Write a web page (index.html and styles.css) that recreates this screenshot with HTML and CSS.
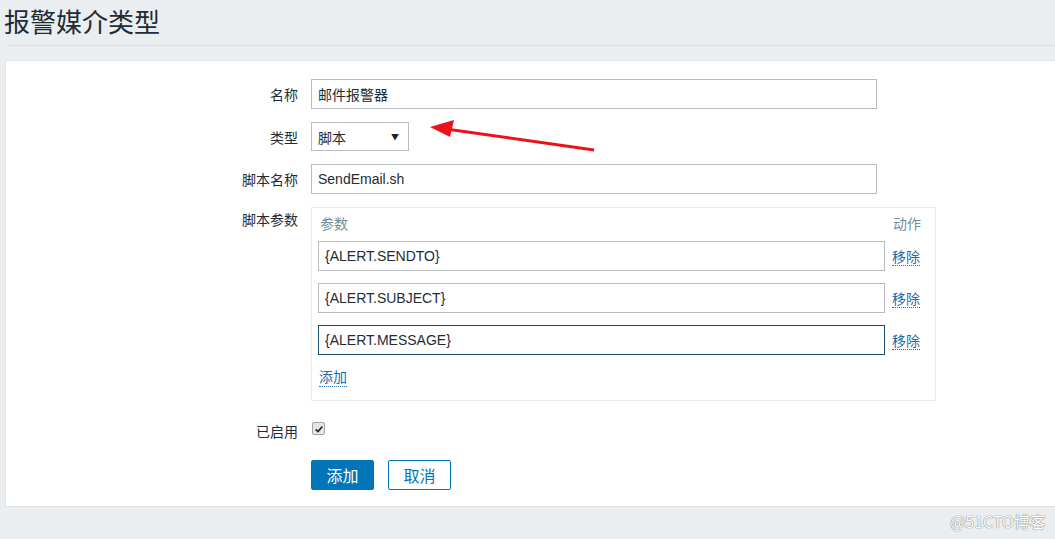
FILE: index.html
```html
<!DOCTYPE html>
<html lang="zh">
<head>
<meta charset="utf-8">
<link rel="stylesheet" href="styles.css">
</head>
<body>
<header class="page-header">
  <h1 class="page-title">报警媒介类型</h1>
</header>
<main class="panel">
  <form class="form">
    <div class="row">
      <label class="label">名称</label>
      <div class="field"><input class="input input-wide" type="text" value="邮件报警器"></div>
    </div>
    <div class="row">
      <label class="label">类型</label>
      <div class="field">
        <div class="select"><span>脚本</span><span class="caret">▼</span></div>
      </div>
    </div>
    <div class="row">
      <label class="label">脚本名称</label>
      <div class="field"><input class="input input-wide" type="text" value="SendEmail.sh"></div>
    </div>
    <div class="row row-top">
      <label class="label label-top">脚本参数</label>
      <div class="field">
        <div class="params">
          <div class="params-head"><span>参数</span><span>动作</span></div>
          <div class="param-row"><input class="input param-input" type="text" value="{ALERT.SENDTO}"><a class="link">移除</a></div>
          <div class="param-row"><input class="input param-input" type="text" value="{ALERT.SUBJECT}"><a class="link">移除</a></div>
          <div class="param-row"><input class="input param-input focused" type="text" value="{ALERT.MESSAGE}"><a class="link">移除</a></div>
          <div class="params-add"><a class="link">添加</a></div>
        </div>
      </div>
    </div>
    <div class="row row-check">
      <label class="label">已启用</label>
      <div class="field"><span class="checkbox"><svg viewBox="0 0 12 12" width="10" height="10"><path d="M2 6.5 L4.8 9 L10 3" fill="none" stroke="#222" stroke-width="2"/></svg></span></div>
    </div>
    <div class="row row-buttons">
      <span class="label"></span>
      <div class="field buttons">
        <button type="button" class="btn btn-primary">添加</button>
        <button type="button" class="btn btn-alt">取消</button>
      </div>
    </div>
  </form>
</main>
<footer class="footer"><span class="watermark">@51CTO博客</span></footer>
<svg class="arrow" width="180" height="40" viewBox="0 0 180 40">
  <line x1="170" y1="33" x2="22" y2="12" stroke="#e8141a" stroke-width="3"/>
  <polygon points="6,10 30,3 26,20" fill="#e8141a"/>
</svg>
</body>
</html>
```
FILE: styles.css
```css
* { box-sizing: border-box; }
html, body { margin: 0; padding: 0; }
body {
  background: #ebeef0;
  font-family: "Microsoft YaHei", "Noto Sans CJK SC", "Liberation Sans", sans-serif;
  color: #1f2c33;
  font-size: 14px;
  width: 1055px;
  height: 539px;
  overflow: hidden;
  position: relative;
}
.page-header {
  height: 46px;
  margin-left: 8px;
  border-bottom: 1px solid #dde1e4;
}
.page-title {
  margin: 0 0 0 -4px;
  font-weight: normal;
  font-size: 26px;
  line-height: 46px;
  color: #1f2c33;
  position: relative;
  top: -2px;
}
.panel {
  margin: 14px 0 0 5px;
  background: #fff;
  border: 1px solid #dfe4e7;
  border-right: none;
  height: 447px;
  padding-top: 18px;
}
.form { display: flex; flex-direction: column; gap: 13px; }
.row { display: flex; align-items: center; }
.row-top { align-items: flex-start; }
.label {
  width: 292px;
  text-align: right;
  margin-right: 13px;
  font-size: 14px;
  color: #1f2c33;
  line-height: 20px;
}
.label-top { padding-top: 2px; }
.field { display: flex; align-items: center; }
.input {
  height: 30px;
  border: 1px solid #b7bcc0;
  background: #fff;
  font-family: "Liberation Sans", "Noto Sans CJK SC", sans-serif;
  font-size: 14px;
  color: #1f2c33;
  padding: 0 6px;
  outline: none;
}
.input-wide { width: 566px; }
.select {
  width: 98px;
  height: 29px;
  border: 1px solid #b7bcc0;
  display: flex;
  align-items: center;
  justify-content: space-between;
  padding: 0 9px 0 6px;
  font-size: 14px;
}
.caret { font-size: 8px; color: #222; }
.params {
  width: 625px;
  height: 194px;
  border: 1px solid #e8ebed;
  padding: 4px 7px 0 6px;
}
.params-head {
  display: flex;
  justify-content: space-between;
  color: #768d99;
  font-size: 14px;
  line-height: 22px;
  padding: 0 7px 0 2px;
  margin-bottom: 7px;
}
.param-row {
  display: flex;
  align-items: center;
  gap: 7px;
  margin-bottom: 12px;
}
.param-input { width: 567px; }
.focused { border-color: #1c4e70; }
.link {
  color: #1f6ca8;
  border-bottom: 1px dotted #1f6ca8;
  font-size: 14px;
  line-height: 18px;
  cursor: pointer;
}
.params-add { margin-top: -1px; padding-left: 1px; }
.row-check { margin-top: 7px; }
.checkbox {
  width: 13px;
  height: 13px;
  border: 1px solid #a0a4a8;
  background: #e4e6e8;
  border-radius: 2px;
  display: flex;
  align-items: center;
  justify-content: center;
  margin-left: 1px;
  margin-top: -5px;
}
.row-buttons { margin-top: 6px; }
.buttons { gap: 14px; }
.btn {
  height: 30px;
  width: 63px;
  font-family: "Microsoft YaHei", "Noto Sans CJK SC", sans-serif;
  font-size: 16px;
  border-radius: 2px;
  padding: 0;
  cursor: pointer;
}
.btn-primary { background: #0275b8; color: #fff; border: 1px solid #0275b8; }
.btn-alt { background: #fff; color: #0275b8; border: 1px solid #0275b8; }
.footer {
  display: flex;
  justify-content: flex-end;
  padding: 2px 9px 0 0;
}
.watermark {
  font-size: 16px;
  color: #fff;
  text-shadow: 0 0 1px #777, 0 0 1px #777;
}
.arrow { position: absolute; left: 424px; top: 117px; }
```
